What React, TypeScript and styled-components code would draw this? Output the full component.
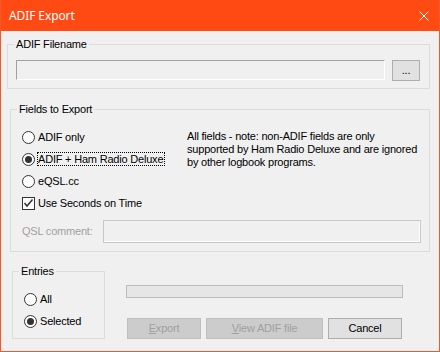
import React from "react";
import styled, { createGlobalStyle } from "styled-components";

const Global = createGlobalStyle`
  html, body { margin: 0; padding: 0; background: #f0f0f0; }
  body { width: 440px; height: 352px; overflow: hidden; }
`;

const Window = styled.div`
  box-sizing: border-box;
  width: 440px;
  height: 352px;
  border: 1px solid #f4582a;
  border-top: none;
  background: #f0f0f0;
  display: flex;
  flex-direction: column;
  font-family: "Liberation Sans", Arial, sans-serif;
  font-size: 11px;
  line-height: 13px;
  letter-spacing: -0.2px;
  color: #000;
`;

const TitleBar = styled.div`
  height: 31px;
  flex: none;
  display: flex;
  align-items: center;
  justify-content: space-between;
  padding: 0 10px 0 8px;
  background: #ff4a14;
  color: #fff;
  font-family: "Noto Sans", "Segoe UI", sans-serif;
  font-size: 12px;
  letter-spacing: -0.1px;
`;

const Title = styled.span`
  line-height: 16px;
`;

const CloseIcon = () => (
  <svg width="10" height="10" viewBox="0 0 10 10">
    <path d="M0.5 0.5 L9.5 9.5 M9.5 0.5 L0.5 9.5" stroke="#fff" strokeWidth="1" fill="none" />
  </svg>
);

const Body = styled.div`
  display: flex;
  flex-direction: column;
  flex: 1;
`;

const Group = styled.div<{ $ml: number; $w: number; $mt: number; $h: number }>`
  position: relative;
  box-sizing: border-box;
  border: 1px solid #dcdcdc;
  margin-left: ${(p) => p.$ml}px;
  margin-top: ${(p) => p.$mt}px;
  width: ${(p) => p.$w}px;
  height: ${(p) => p.$h}px;
  flex: none;
`;

const Legend = styled.span`
  position: absolute;
  left: 6px;
  top: -7px;
  padding: 0 2px;
  background: #f0f0f0;
  white-space: nowrap;
`;

const FileRow = styled.div`
  display: flex;
  align-items: flex-start;
  gap: 7px;
  padding: 15px 0 0 8px;
`;

const FileInput = styled.div`
  box-sizing: border-box;
  width: 369px;
  height: 20px;
  background: #f0f0f0;
  border-top: 1px solid #a0a0a0;
  border-left: 1px solid #a0a0a0;
  border-right: 1px solid #fff;
  border-bottom: 1px solid #fff;
`;

const Button = styled.button<{ $w: number; $disabled?: boolean }>`
  box-sizing: border-box;
  width: ${(p) => p.$w}px;
  height: 21px;
  margin: 0;
  padding: 0;
  font: inherit;
  letter-spacing: inherit;
  line-height: 13px;
  background: ${(p) => (p.$disabled ? "#cccccc" : "#e1e1e1")};
  border: 1px solid ${(p) => (p.$disabled ? "#bfbfbf" : "#adadad")};
  color: ${(p) => (p.$disabled ? "#a0a0a0" : "#000")};
  display: flex;
  align-items: center;
  justify-content: center;
`;

const Mnemonic = styled.span`
  text-decoration: underline;
`;

const FieldsInner = styled.div`
  padding: 16px 8px 0 11px;
  display: flex;
  flex-direction: column;
`;

const TopSection = styled.div`
  display: flex;
`;

const OptionCol = styled.div`
  width: 165px;
  display: flex;
  flex-direction: column;
`;

const OptionRow = styled.div`
  height: 22px;
  display: flex;
  align-items: center;
`;

const RadioCircle = styled.span<{ $checked?: boolean }>`
  box-sizing: border-box;
  width: 13px;
  height: 13px;
  border-radius: 50%;
  border: 1px solid #333;
  background: #fff;
  display: flex;
  align-items: center;
  justify-content: center;
  flex: none;
  &::after {
    content: "";
    width: 7px;
    height: 7px;
    border-radius: 50%;
    background: ${(p) => (p.$checked ? "#333" : "transparent")};
  }
`;

const CheckBox = styled.span`
  box-sizing: border-box;
  width: 13px;
  height: 13px;
  border: 1px solid #333;
  background: #fff;
  display: flex;
  flex: none;
`;

const OptionLabel = styled.span<{ $focused?: boolean }>`
  margin-left: 2px;
  border: 1px dotted ${(p) => (p.$focused ? "#000" : "transparent")};
  line-height: 12px;
  padding-right: 1px;
  white-space: nowrap;
`;

const Description = styled.div`
  padding-top: 4px;
  white-space: nowrap;
`;

const QslRow = styled.div`
  display: flex;
  align-items: center;
  margin-top: 6px;
  height: 23px;
`;

const QslLabel = styled.span`
  width: 81px;
  color: #a0a0a0;
  flex: none;
`;

const QslInput = styled.div`
  box-sizing: border-box;
  width: 318px;
  height: 23px;
  border: 1px solid #c8c8c8;
  background: #f0f0f0;
  box-shadow: inset -1px -1px 0 #fff;
`;

const BottomRow = styled.div`
  display: flex;
  align-items: flex-start;
  margin-top: 19px;
`;

const EntriesInner = styled.div`
  padding: 16px 0 0 11px;
  display: flex;
  flex-direction: column;
`;

const RightCol = styled.div`
  margin-left: 21px;
  padding-top: 14px;
  width: 277px;
  display: flex;
  flex-direction: column;
`;

const Progress = styled.div`
  box-sizing: border-box;
  height: 13px;
  width: 277px;
  border: 1px solid #bcbcbc;
  background: #e6e6e6;
`;

const ButtonRow = styled.div`
  display: flex;
  gap: 5px;
  margin: 20px 0 0 1px;
`;

const Radio = ({ label, checked, focused }: { label: string; checked?: boolean; focused?: boolean }) => (
  <OptionRow>
    <RadioCircle $checked={checked} />
    <OptionLabel $focused={focused}>{label}</OptionLabel>
  </OptionRow>
);

export default function App() {
  return (
    <>
      <Global />
      <Window>
        <TitleBar>
          <Title>ADIF Export</Title>
          <CloseIcon />
        </TitleBar>
        <Body>
          <Group $ml={6} $w={423} $mt={13} $h={45}>
            <Legend>ADIF Filename</Legend>
            <FileRow>
              <FileInput />
              <Button $w={28}>...</Button>
            </FileRow>
          </Group>

          <Group $ml={9} $w={420} $mt={20} $h={143}>
            <Legend>Fields to Export</Legend>
            <FieldsInner>
              <TopSection>
                <OptionCol>
                  <Radio label="ADIF only" />
                  <Radio label="ADIF + Ham Radio Deluxe" checked focused />
                  <Radio label="eQSL.cc" />
                  <OptionRow>
                    <CheckBox>
                      <svg width="11" height="11" viewBox="0 0 11 11">
                        <polyline points="1.5,5 4,8 9.5,1.5" fill="none" stroke="#333" strokeWidth="1.5" />
                      </svg>
                    </CheckBox>
                    <OptionLabel>Use Seconds on Time</OptionLabel>
                  </OptionRow>
                </OptionCol>
                <Description>
                  All fields - note: non-ADIF fields are only
                  <br />
                  supported by Ham Radio Deluxe and are ignored
                  <br />
                  by other logbook programs.
                </Description>
              </TopSection>
              <QslRow>
                <QslLabel>QSL comment:</QslLabel>
                <QslInput />
              </QslRow>
            </FieldsInner>
          </Group>

          <BottomRow>
            <Group $ml={11} $w={93} $mt={0} $h={68}>
              <Legend>Entries</Legend>
              <EntriesInner>
                <Radio label="All" />
                <Radio label="Selected" checked />
              </EntriesInner>
            </Group>
            <RightCol>
              <Progress />
              <ButtonRow>
                <Button $w={74} $disabled disabled>
                  <Mnemonic>E</Mnemonic>xport
                </Button>
                <Button $w={117} $disabled disabled>
                  <Mnemonic>V</Mnemonic>iew ADIF file
                </Button>
                <Button $w={74}>Cancel</Button>
              </ButtonRow>
            </RightCol>
          </BottomRow>
        </Body>
      </Window>
    </>
  );
}
